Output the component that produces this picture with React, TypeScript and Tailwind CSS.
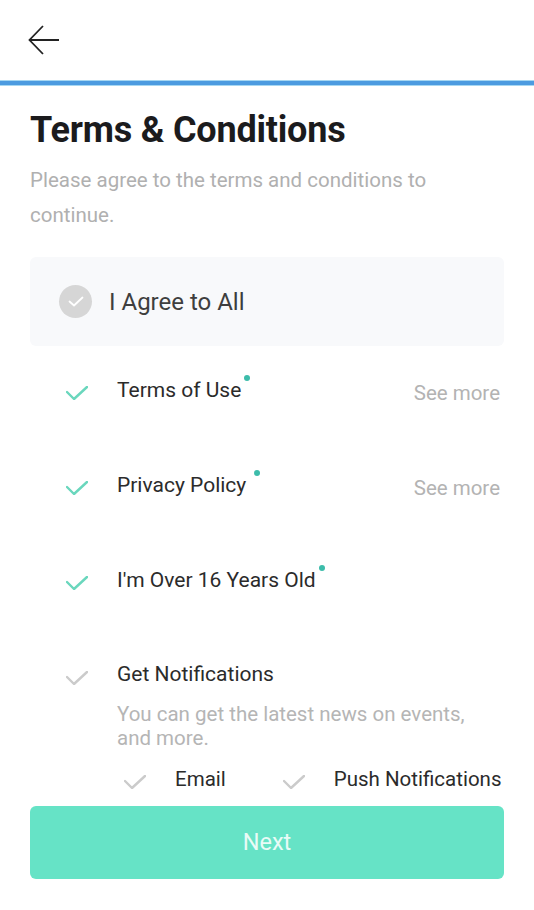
import React from "react";

const font = { fontFamily: "Roboto, 'Noto Sans', Arial, sans-serif" };

const Check = ({ color, size = 22 }: { color: string; size?: number }) => (
  <svg width={size} height={Math.round(size * 0.64)} viewBox="0 0 22 14" fill="none">
    <polyline points="1,6 8,13 21,1" stroke={color} strokeWidth="2.4" strokeLinecap="round" strokeLinejoin="round" />
  </svg>
);

const Dot = ({ gap = 3 }: { gap?: number }) => (
  <span
    className="inline-block w-[6px] h-[6px] rounded-full bg-[#3cbcaa] align-top mt-[-2px]"
    style={{ marginLeft: gap }}
  />
);

const Row = ({ label, dotGap, more }: { label: string; dotGap: number; more?: boolean }) => (
  <div className="flex items-center h-[48px]">
    <div className="w-[87px] pl-[36px] pt-[6px]">
      <Check color="#6ad7bd" />
    </div>
    <div className="flex-1 text-[21px] text-[#2b2b2b] leading-[26px]">
      {label}
      <Dot gap={dotGap} />
    </div>
    {more && <div className="text-[20.5px] text-[#b3b3b3] pr-[4px] pt-[6px]">See more</div>}
  </div>
);

export default function App() {
  return (
    <div className="w-[534px] h-[910px] bg-white flex flex-col" style={font}>
      <div className="h-[80px] flex items-center pl-[28px]">
        <svg width="32" height="30" viewBox="0 0 32 30" fill="none">
          <path d="M31 15H2M15 1L1.5 15L15 29" stroke="#222" strokeWidth="1.8" />
        </svg>
      </div>
      <div className="h-[6px] bg-[#4c9be0] border-y border-[#a6d7f2]" />

      <div className="px-[30px] flex flex-col flex-1">
        <h1 className="mt-[23px] text-[36px] leading-[42px] font-bold text-[#1b1b1d] tracking-[-0.2px]">
          Terms &amp; Conditions
        </h1>
        <p className="mt-[12px] w-[420px] text-[20.5px] leading-[35px] text-[#b0b0b0]">
          Please agree to the terms and conditions to continue.
        </p>

        <div className="mt-[24px] h-[89px] rounded-[6px] bg-[#f8f9fb] flex items-center px-[29px]">
          <div className="w-[33px] h-[33px] rounded-full bg-[#d6d6d6] flex items-center justify-center">
            <svg width="16" height="11" viewBox="0 0 16 11" fill="none">
              <polyline points="1.5,5.5 6,9.5 14.5,1.5" stroke="#fff" strokeWidth="1.8" strokeLinecap="round" strokeLinejoin="round" />
            </svg>
          </div>
          <span className="ml-[17px] text-[24px] text-[#3e3e3e]">I Agree to All</span>
        </div>

        <div className="mt-[20px] flex flex-col gap-[47px]">
          <Row label="Terms of Use" dotGap={3} more />
          <Row label="Privacy Policy" dotGap={8} more />
          <Row label="I'm Over 16 Years Old" dotGap={3} />
          <div>
            <div className="flex items-center h-[48px]">
              <div className="w-[87px] pl-[36px] pt-[6px]">
                <Check color="#cbcbcb" />
              </div>
              <div className="text-[21px] text-[#2b2b2b]">Get Notifications</div>
            </div>
            <p className="ml-[87px] mt-[3px] text-[20.5px] leading-[24px] text-[#b5b5b5] w-[370px]">
              You can get the latest news on events, and more.
            </p>
            <div className="ml-[94px] mt-[11px] flex items-center h-[36px] whitespace-nowrap">
              <div className="pt-[6px] w-[51px] shrink-0">
                <Check color="#cbcbcb" />
              </div>
              <span className="text-[20.5px] text-[#2b2b2b] shrink-0">Email</span>
              <div className="pt-[6px] ml-[57px] w-[51px] shrink-0">
                <Check color="#cbcbcb" />
              </div>
              <span className="text-[20.5px] text-[#2b2b2b] shrink-0">Push Notifications</span>
            </div>
          </div>
        </div>

        <button className="mt-[auto] mb-[31px] h-[73px] w-full rounded-[6px] bg-[#66e3c6] text-[23.5px] text-[#e9fbf6]">
          Next
        </button>
      </div>
    </div>
  );
}
